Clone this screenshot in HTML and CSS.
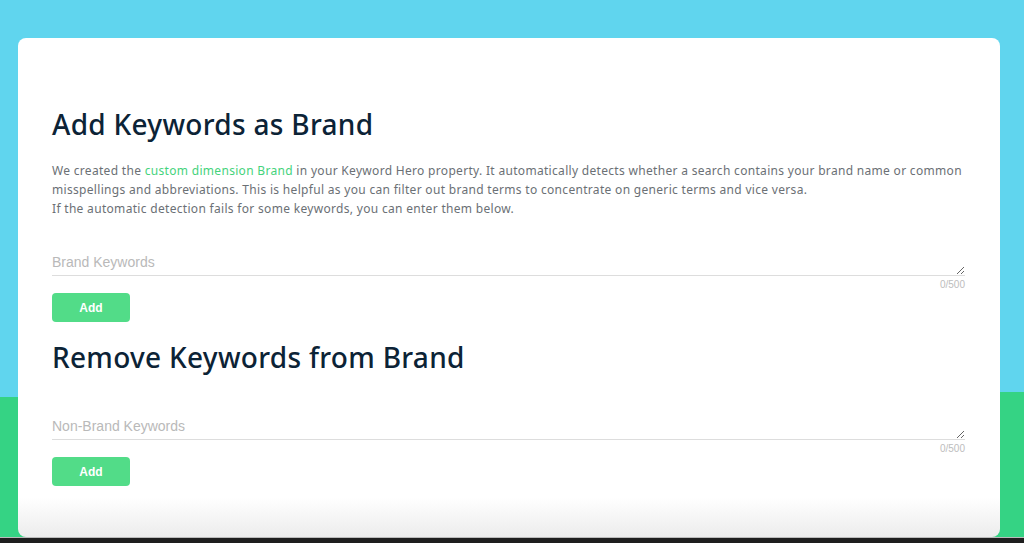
FILE: index.html
```html
<!DOCTYPE html>
<html lang="en">
<head>
    <meta charset="UTF-8">
    <meta name="viewport" content="width=device-width, initial-scale=1.0">
    <title>Brand Keywords</title>
    <link rel="stylesheet" href="styles.css">
</head>
<body>
    <div class="backdrop">
        <div class="card">
            <h2>Add Keywords as Brand</h2>
            <p class="intro">
                We created the <a href="#">custom dimension Brand</a> in your Keyword Hero property. It automatically detects whether a search contains your brand name or common misspellings and abbreviations. This is helpful as you can filter out brand terms to concentrate on generic terms and vice versa.<br>
                If the automatic detection fails for some keywords, you can enter them below.
            </p>
            <form class="kw-form">
                <textarea class="kw-input" placeholder="Brand Keywords" maxlength="500"></textarea>
                <div class="counter">0/500</div>
                <button type="submit">Add</button>
            </form>

            <h2 class="second">Remove Keywords from Brand</h2>
            <form class="kw-form spaced">
                <textarea class="kw-input" placeholder="Non-Brand Keywords" maxlength="500"></textarea>
                <div class="counter">0/500</div>
                <button type="submit">Add</button>
            </form>
        </div>
    </div>
    <div class="taskbar"></div>
</body>
</html>
```

FILE: styles.css
```css
body {
    margin: 0;
    height: 543px;
    overflow: hidden;
    font-family: "Noto Sans", sans-serif;
    display: flex;
    flex-direction: column;
}

.backdrop {
    flex: 1;
    background: linear-gradient(179.72deg, #60d5ee 0, #60d5ee 397px, #35d384 397px);
    padding: 38px 24px 0 18px;
}

.card {
    background: linear-gradient(to bottom, #ffffff 0, #ffffff 460px, #ececec 100%);
    border-radius: 8px;
    height: 464px;
    padding: 35px 35px 0 34px;
}

h2 {
    font-family: "Noto Sans", sans-serif;
    font-weight: 500;
    font-size: 28px;
    color: #0c2336;
    margin: 34px 0 0 0;
    line-height: 34px;
    letter-spacing: 0.3px;
}

h2.second {
    margin-top: 18px;
}

.intro {
    font-size: 12px;
    line-height: 19px;
    color: #6b7075;
    margin: 20px -20px 0 0;
    letter-spacing: 0.31px;
}

.intro a {
    color: #45d37c;
    text-decoration: none;
}

.kw-form {
    margin-top: 33px;
    display: flex;
    flex-direction: column;
    align-items: flex-start;
}

.kw-form.spaced {
    margin-top: 41px;
}

.kw-input {
    width: 913px;
    height: 25px;
    box-sizing: border-box;
    border: none;
    border-bottom: 1px solid #dddddd;
    padding: 3px 0 0 0;
    font-family: "Liberation Sans", sans-serif;
    font-size: 14px;
    resize: vertical;
    outline: none;
}

.kw-input::placeholder {
    color: #b9b9b9;
}

.counter {
    width: 913px;
    text-align: right;
    font-family: "Liberation Sans", sans-serif;
    font-size: 10px;
    color: #bdbdbd;
    margin-top: 3px;
    line-height: 12px;
}

button {
    margin-top: 2px;
    width: 78px;
    height: 29px;
    background-color: #52dc88;
    border: none;
    border-radius: 4px;
    color: white;
    font-family: "Liberation Sans", sans-serif;
    font-weight: bold;
    font-size: 12px;
    cursor: pointer;
}

button:hover {
    opacity: 0.8;
}

.taskbar {
    height: 5px;
    background: #1e1e1e;
    border-top: 1px solid #bbbbbb;
}
```
